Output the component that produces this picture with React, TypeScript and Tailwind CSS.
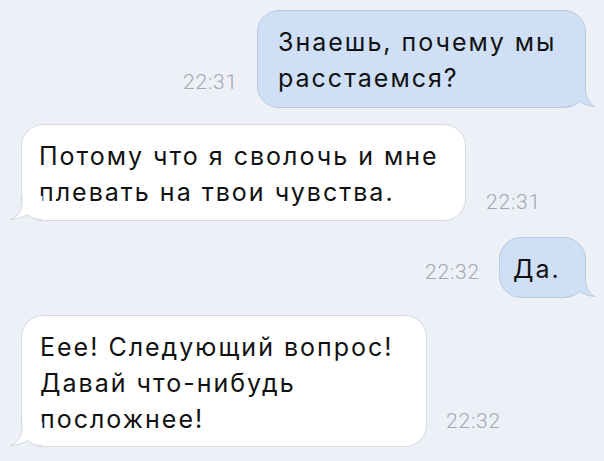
import React from "react";

type Side = "left" | "right";

// Curled tail drawn at the bottom corner of a chat bubble.
function Tail({ side, fill, stroke, ext }: { side: Side; fill: string; stroke: string; ext: number }) {
  // Local coords: bubble edge at x=20.5, bubble bottom at y=23.5, tip sticks out by `ext`.
  const e = 20.5;
  const tx = e + ext;
  const outline = `M${e} 0 L${e} 6 C${e} 14 ${e + 3} 20 ${tx} 23.5 C${tx - 6} 23 ${e - 2} 21 ${e - 6} 18.5 C${e - 9} 21.5 ${e - 13} 23.5 ${e - 20} 23.5`;
  const fillPath = `M0 24 L0 0 L${e} 0 ${outline.slice(outline.indexOf("L"))} L0 23.5 Z`;
  const w = tx + 1;
  return (
    <svg
      width={w}
      height={24}
      viewBox={`0 0 ${w} 24`}
      className={
        side === "right"
          ? "absolute bottom-0 overflow-visible"
          : "absolute bottom-0 overflow-visible -scale-x-100"
      }
      style={side === "right" ? { right: -(ext + 1) } : { left: -(ext + 1) }}
    >
      <path d={fillPath} fill={fill} />
      <path d={outline} fill="none" stroke={stroke} strokeWidth={1} />
    </svg>
  );
}

function Time({ children, className }: { children: React.ReactNode; className: string }) {
  return (
    <span
      className={`shrink-0 text-[21px] leading-[20px] font-light tracking-[0.8px] text-[#a3a8b0] font-['Roboto',sans-serif] ${className}`}
    >
      {children}
    </span>
  );
}

const bubbleText =
  "text-[25px] leading-[36px] tracking-[2px] text-[#111] whitespace-nowrap font-['Inter','Liberation_Sans',sans-serif]";

export default function App() {
  return (
    <div className="w-[604px] h-[461px] overflow-hidden bg-[#edf1f7] flex flex-col pt-[10px] gap-4">
      {/* outgoing */}
      <div className="flex justify-end items-end gap-[19px] pr-[18px]">
        <Time className="mb-[16px]">22:31</Time>
        <div
          className={`relative w-[329px] h-[98px] rounded-[22px] border border-[#b9cae0] bg-[#cfdff5] pl-[20px] pt-[13px] ${bubbleText}`}
        >
          Знаешь, почему мы
          <br />
          расстаемся?
          <Tail side="right" fill="#cfdff5" stroke="#b9cae0" ext={9} />
        </div>
      </div>

      {/* incoming */}
      <div className="flex justify-start items-end gap-[20px] pl-[21px]">
        <div
          className={`relative w-[445px] h-[97px] rounded-[22px] border border-[#d5d9df] bg-white pl-[17px] pt-[13px] ${bubbleText}`}
        >
          Потому что я сволочь и мне
          <br />
          плевать на твои чувства.
          <Tail side="left" fill="#ffffff" stroke="#d5d9df" ext={12} />
        </div>
        <Time className="mb-[9px]">22:31</Time>
      </div>

      {/* outgoing */}
      <div className="flex justify-end items-end gap-[19px] pr-[18px]">
        <Time className="mb-[16px]">22:32</Time>
        <div
          className={`relative w-[87px] h-[61px] rounded-[22px] border border-[#b9cae0] bg-[#cfdff5] pl-[13px] pt-[13px] ${bubbleText}`}
        >
          Да.
          <Tail side="right" fill="#cfdff5" stroke="#b9cae0" ext={9} />
        </div>
      </div>

      {/* incoming */}
      <div className="flex justify-start items-end gap-[19px] pl-[21px] mt-px">
        <div
          className={`relative w-[406px] h-[132px] rounded-[22px] border border-[#d5d9df] bg-white pl-[18px] pt-[13px] ${bubbleText}`}
        >
          Еее! Следующий вопрос!
          <br />
          Давай что-нибудь
          <br />
          посложнее!
          <Tail side="left" fill="#ffffff" stroke="#d5d9df" ext={12} />
        </div>
        <Time className="mb-[16px]">22:32</Time>
      </div>
    </div>
  );
}
